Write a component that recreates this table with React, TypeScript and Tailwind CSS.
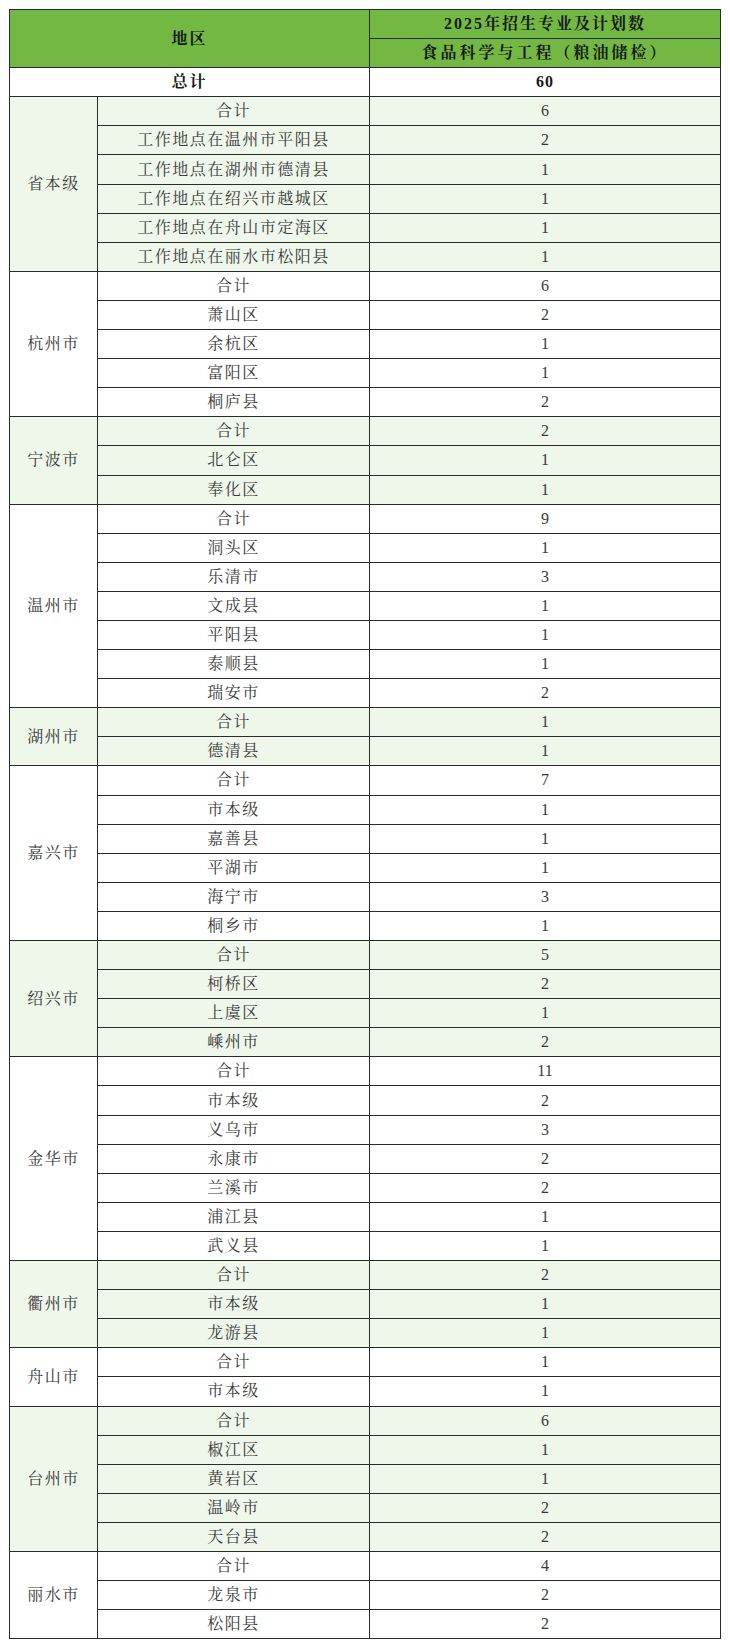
const groups: { name: string; rows: [string, number][] }[] = [
  {
    name: "省本级",
    rows: [
      ["合计", 6],
      ["工作地点在温州市平阳县", 2],
      ["工作地点在湖州市德清县", 1],
      ["工作地点在绍兴市越城区", 1],
      ["工作地点在舟山市定海区", 1],
      ["工作地点在丽水市松阳县", 1],
    ],
  },
  { name: "杭州市", rows: [["合计", 6], ["萧山区", 2], ["余杭区", 1], ["富阳区", 1], ["桐庐县", 2]] },
  { name: "宁波市", rows: [["合计", 2], ["北仑区", 1], ["奉化区", 1]] },
  {
    name: "温州市",
    rows: [["合计", 9], ["洞头区", 1], ["乐清市", 3], ["文成县", 1], ["平阳县", 1], ["泰顺县", 1], ["瑞安市", 2]],
  },
  { name: "湖州市", rows: [["合计", 1], ["德清县", 1]] },
  {
    name: "嘉兴市",
    rows: [["合计", 7], ["市本级", 1], ["嘉善县", 1], ["平湖市", 1], ["海宁市", 3], ["桐乡市", 1]],
  },
  { name: "绍兴市", rows: [["合计", 5], ["柯桥区", 2], ["上虞区", 1], ["嵊州市", 2]] },
  {
    name: "金华市",
    rows: [["合计", 11], ["市本级", 2], ["义乌市", 3], ["永康市", 2], ["兰溪市", 2], ["浦江县", 1], ["武义县", 1]],
  },
  { name: "衢州市", rows: [["合计", 2], ["市本级", 1], ["龙游县", 1]] },
  { name: "舟山市", rows: [["合计", 1], ["市本级", 1]] },
  { name: "台州市", rows: [["合计", 6], ["椒江区", 1], ["黄岩区", 1], ["温岭市", 2], ["天台县", 2]] },
  { name: "丽水市", rows: [["合计", 4], ["龙泉市", 2], ["松阳县", 2]] },
]

const font = {
  fontFamily: '"Liberation Serif", "Noto Serif CJK SC", "Noto Sans CJK SC", serif',
}

export default function App() {
  return (
    <div className="bg-white min-h-[1649px] pt-[9px] pl-[9px]" style={font}>
      <table className="border-collapse w-[711px] table-fixed text-[16px] text-[#3a3a3a] border-[1.5px] border-[#2b2b2b]">
        <colgroup>
          <col className="w-[88px]" />
          <col className="w-[272px]" />
          <col className="w-[351px]" />
        </colgroup>
        <thead>
          <tr className="h-[29.1px] bg-[#72b843]">
            <th colSpan={2} rowSpan={2} className="border border-[#2b2b2b] font-bold text-[#1a1a1a] tracking-[2px]">
              地区
            </th>
            <th className="border border-[#2b2b2b] font-bold text-[#1a1a1a] tracking-[2px]">2025年招生专业及计划数</th>
          </tr>
          <tr className="h-[29.1px] bg-[#72b843]">
            <th className="border border-[#2b2b2b] font-bold text-[#1a1a1a] tracking-[3px]">食品科学与工程（粮油储检）</th>
          </tr>
        </thead>
        <tbody>
          <tr className="h-[29.1px] bg-white">
            <td colSpan={2} className="border border-[#2b2b2b] text-center font-bold text-[#1a1a1a] tracking-[2px]">
              总计
            </td>
            <td className="border border-[#2b2b2b] text-center font-bold text-[#1a1a1a] tracking-[1px]">60</td>
          </tr>
          {groups.map((g, gi) => {
            const bg = gi % 2 === 0 ? "bg-[#eff6ea]" : "bg-white"
            return g.rows.map(([label, n], ri) => (
              <tr key={g.name + ri} className={`h-[29.1px] ${bg}`}>
                {ri === 0 && (
                  <td rowSpan={g.rows.length} className="border border-[#2b2b2b] text-center tracking-[1.5px]">
                    {g.name}
                  </td>
                )}
                <td className="border border-[#2b2b2b] text-center tracking-[1.5px] leading-none">{label}</td>
                <td className="border border-[#2b2b2b] text-center leading-none">{n}</td>
              </tr>
            ))
          })}
        </tbody>
      </table>
    </div>
  )
}
